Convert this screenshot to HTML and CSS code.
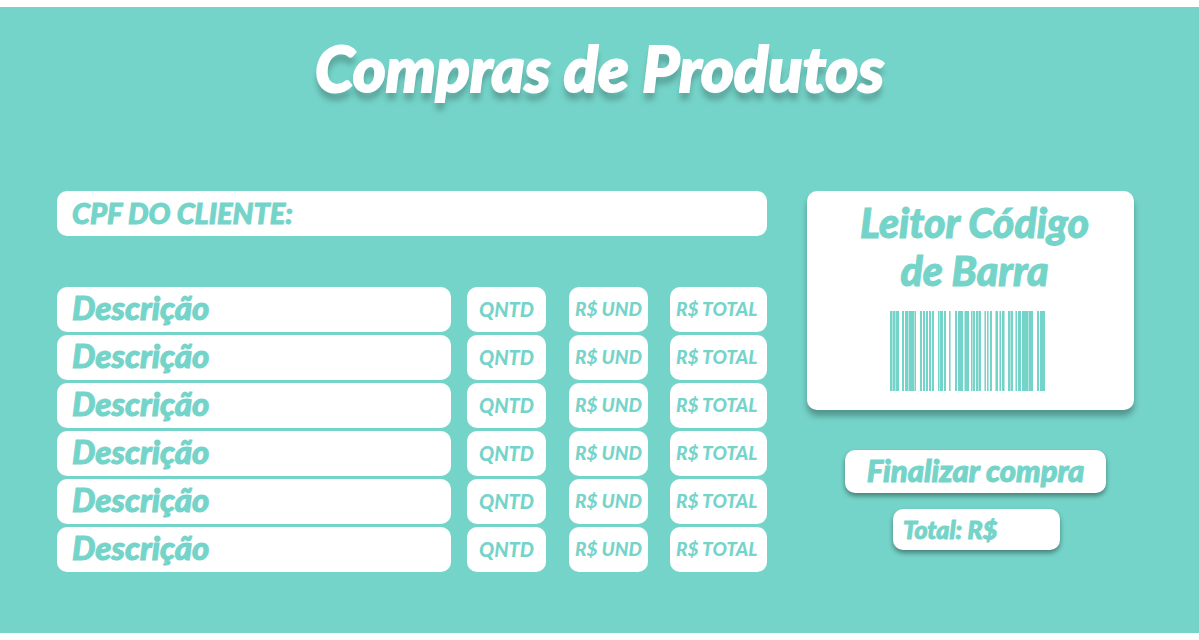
FILE: index.html
```html
<!DOCTYPE html>
<html lang="pt-BR">
<head>
<meta charset="utf-8">
<title>Compras de Produtos</title>
<link rel="stylesheet" href="styles.css">
</head>
<body>
<main class="page">
  <h1 class="title">Compras de Produtos</h1>
  <form class="content">
    <section class="order">
      <label class="field client">CPF DO CLIENTE:<input type="text" name="cpf"></label>
      <div class="items">
        <label class="field description">Descrição<input type="text"></label>
        <label class="field quantity">QNTD<input type="text"></label>
        <label class="field unit">R$ UND<input type="text"></label>
        <label class="field sum">R$ TOTAL<input type="text"></label>

        <label class="field description">Descrição<input type="text"></label>
        <label class="field quantity">QNTD<input type="text"></label>
        <label class="field unit">R$ UND<input type="text"></label>
        <label class="field sum">R$ TOTAL<input type="text"></label>

        <label class="field description">Descrição<input type="text"></label>
        <label class="field quantity">QNTD<input type="text"></label>
        <label class="field unit">R$ UND<input type="text"></label>
        <label class="field sum">R$ TOTAL<input type="text"></label>

        <label class="field description">Descrição<input type="text"></label>
        <label class="field quantity">QNTD<input type="text"></label>
        <label class="field unit">R$ UND<input type="text"></label>
        <label class="field sum">R$ TOTAL<input type="text"></label>

        <label class="field description">Descrição<input type="text"></label>
        <label class="field quantity">QNTD<input type="text"></label>
        <label class="field unit">R$ UND<input type="text"></label>
        <label class="field sum">R$ TOTAL<input type="text"></label>

        <label class="field description">Descrição<input type="text"></label>
        <label class="field quantity">QNTD<input type="text"></label>
        <label class="field unit">R$ UND<input type="text"></label>
        <label class="field sum">R$ TOTAL<input type="text"></label>
      </div>
    </section>
    <aside class="checkout">
      <section class="reader">
        <h2 class="reader-title">Leitor Código<br>de Barra</h2>
        <svg class="barcode" viewBox="0 0 155 80" width="155" height="80" aria-hidden="true" shape-rendering="crispEdges">
          <path fill="#75d4c9" d="M0 0h9v80H0zM12 0h2v80h-2zM15 0h11v80H15zM30 0h2v80h-2zM33 0h2v80h-2zM36 0h2v80h-2zM39 0h2v80h-2zM42 0h2v80h-2zM48 0h5v80h-5zM54 0h2v80h-2zM59 0h2v80h-2zM65 0h2v80h-2zM68 0h5v80h-5zM74 0h5v80h-5zM81 0h4v80h-4zM86 0h5v80h-5zM95 0h1v80h-1zM97 0h2v80h-2zM100 0h2v80h-2zM106 0h2v80h-2zM110 0h1v80h-1zM112 0h2v80h-2zM118 0h5v80h-5zM126 0h1v80h-1zM128 0h3v80h-3zM132 0h6v80h-6zM139 0h4v80h-4zM147 0h2v80h-2zM150 0h5v80h-5z"/>
          <path fill="#b5e5df" d="M2 0h1v80H2zM5 0h1v80H5zM18 0h1v80h-1zM24 0h1v80h-1zM49 0h1v80h-1zM60 0h1v80h-1zM74 0h1v80h-1zM82 0h1v80h-1zM88 0h1v80h-1zM94 0h1v80h-1zM98 0h1v80h-1zM105 0h1v80h-1zM109 0h1v80h-1zM114 0h1v80h-1zM120 0h1v80h-1zM125 0h1v80h-1zM138 0h1v80h-1z"/>
        </svg>
      </section>
      <button class="finish" type="button">Finalizar compra</button>
      <output class="total">Total: R$</output>
    </aside>
  </form>
</main>
</body>
</html>
```
FILE: styles.css
```css
* {
  box-sizing: border-box;
}

body {
  margin: 0;
  padding: 7px 0;
  background: #fff;
  color: #75d4c9;
  font-family: Lato, "Open Sans", sans-serif;
  font-style: italic;
  font-weight: 900;
}

.page {
  padding: 28px 65px 61px 57px;
  background: #75d4c9;
}

.title {
  margin: 0 0 90px;
  padding-left: 8px;
  color: #fff;
  font-size: 63px;
  font-weight: 900;
  line-height: 66px;
  text-align: center;
  text-shadow: 0 8px 6px rgba(0, 0, 0, 0.25);
  -webkit-text-stroke: 2px #fff;
}

.content {
  display: grid;
  grid-template-columns: 710fr 327fr;
  gap: 40px;
  align-items: start;
}

.field {
  display: flex;
  align-items: center;
  height: 45px;
  padding: 0 0 2px 6px;
  border-radius: 10px;
  background: #fff;
  font-size: 19px;
  white-space: nowrap;
}

.field input {
  flex: 1;
  width: 0;
  min-width: 0;
  padding: 0;
  border: 0;
  outline: 0;
  background: transparent;
  color: inherit;
  font: inherit;
}

.client,
.description {
  padding-left: 15px;
  font-size: 29px;
  -webkit-text-stroke: 1px #75d4c9;
}

.client {
  margin-bottom: 51px;
}

.items {
  display: grid;
  grid-template-columns: 394fr 16fr 79fr 23fr 79fr 22fr 97fr;
  row-gap: 3px;
}

.description {
  grid-column: 1;
  padding-bottom: 6px;
  font-size: 33px;
}

.quantity {
  grid-column: 3;
  padding-left: 12px;
  font-size: 20px;
}

.unit {
  grid-column: 5;
}

.sum {
  grid-column: 7;
}

.checkout {
  display: flex;
  flex-direction: column;
  align-items: center;
}

.reader {
  display: flex;
  flex-direction: column;
  align-items: center;
  align-self: stretch;
  padding: 8px 0 19px 8px;
  border-radius: 10px;
  background: #fff;
  box-shadow: 0 6px 6px rgba(0, 0, 0, 0.3);
}

.reader-title {
  margin: 0 0 16px;
  font-size: 41px;
  font-weight: 900;
  line-height: 48px;
  text-align: center;
  -webkit-text-stroke: 1px #75d4c9;
}

.barcode {
  margin-right: 14px;
}

.finish,
.total {
  border: 0;
  border-radius: 10px;
  background: #fff;
  box-shadow: 0 3px 5px rgba(0, 0, 0, 0.4);
  color: inherit;
  font: inherit;
  -webkit-text-stroke: 1px #75d4c9;
}

.finish {
  width: 80%;
  height: 43px;
  margin: 40px 0 16px 10px;
  padding: 0 0 4px;
  font-size: 31px;
}

.total {
  width: 51%;
  margin-left: 12px;
  padding: 0 10px;
  font-size: 25px;
  line-height: 41px;
}
```
